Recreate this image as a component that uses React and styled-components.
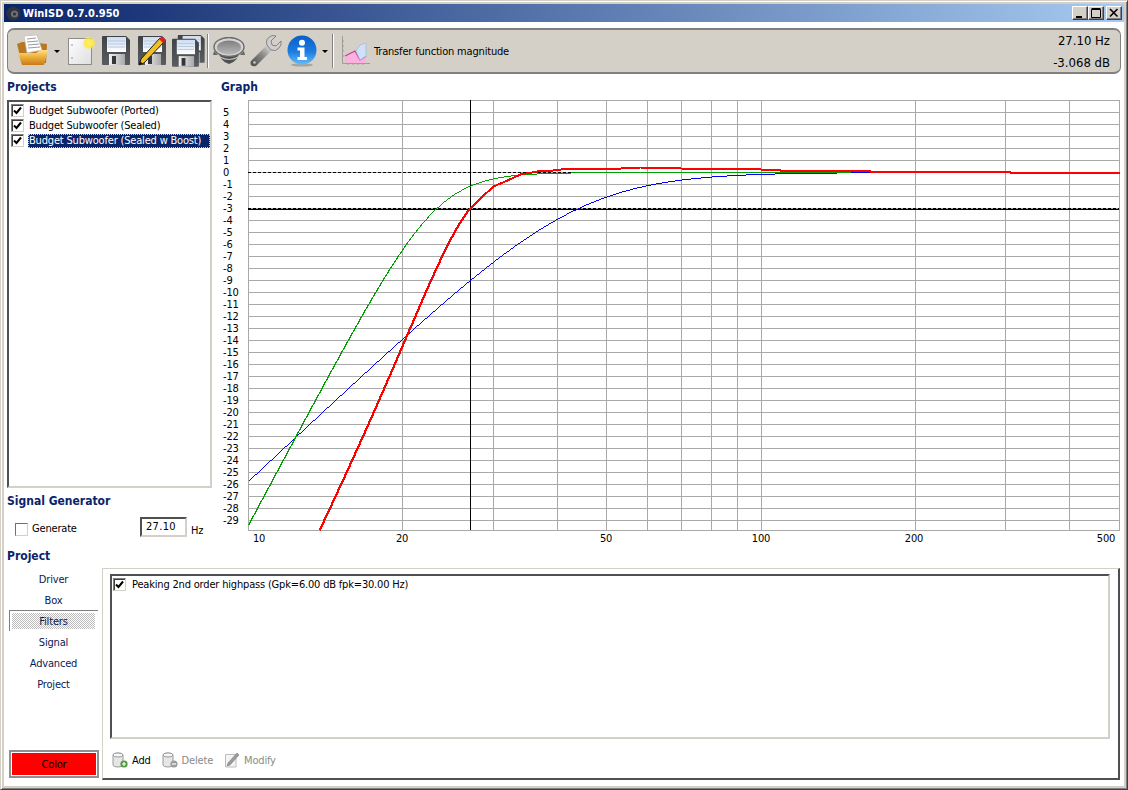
// WinISD main window: toolbar, project list, response graph and filter panel.
import React from 'react';
import styled, { createGlobalStyle } from 'styled-components';

const GlobalStyle = createGlobalStyle`
  html, body {
    margin: 0;
    padding: 0;
    overflow: hidden;
    background: #d4d0c8;
  }
  * { box-sizing: border-box; }
`;

const Window = styled.div`
  width: 1128px;
  height: 790px;
  display: flex;
  flex-direction: column;
  padding: 3px;
  background: #d4d0c8;
  border: 1px solid;
  border-color: #d4d0c8 #404040 #404040 #d4d0c8;
  box-shadow: inset 1px 1px 0 #fff, inset -1px -1px 0 #808080;
  font-family: "DejaVu Sans Condensed", "DejaVu Sans", sans-serif;
  font-stretch: condensed;
  font-size: 11px;
  letter-spacing: -0.18px;
  color: #000;
`;

const TitleBar = styled.div`
  height: 18px;
  flex: none;
  display: flex;
  align-items: center;
  padding: 0 2px;
  background: linear-gradient(90deg, #0a246a, #a6caf0);
`;

const TitleText = styled.span`
  margin-left: 2px;
  color: #fff;
  font-weight: bold;
  font-size: 11px;
  letter-spacing: 0;
`;

const TitleButtons = styled.div`
  margin-left: auto;
  display: flex;
`;

const CaptionButton = styled.div`
  width: 16px;
  height: 14px;
  margin-left: ${(p) => (p.$gap ? '2px' : '0')};
  display: flex;
  align-items: center;
  justify-content: center;
  background: #d4d0c8;
  border: 1px solid;
  border-color: #fff #404040 #404040 #fff;
  box-shadow: inset -1px -1px 0 #808080;
`;

const Client = styled.div`
  flex: 1;
  min-height: 0;
  display: flex;
  flex-direction: column;
  padding: 6px 3px 0 3px;
  background: #fff;
`;

const Toolbar = styled.div`
  height: 46px;
  flex: none;
  display: flex;
  align-items: center;
  padding: 0 9px 0 9px;
  background: #d4d0c8;
  border: 2px solid #808080;
  border-left-width: 1px;
  border-right-width: 1px;
  border-radius: 7px;
`;

const ToolIcon = styled.svg`
  flex: none;
  display: block;
  margin-left: ${(p) => p.$left || 0}px;
`;

const DropArrow = styled.span`
  flex: none;
  width: 0;
  height: 0;
  margin-left: ${(p) => p.$left || 0}px;
  border: 3px solid transparent;
  border-top: 3px solid #000;
  border-bottom: 0;
`;

const ToolSeparator = styled.span`
  flex: none;
  width: 2px;
  height: 34px;
  margin-left: ${(p) => p.$left || 0}px;
  background: #808080;
  border-right: 1px solid #fff;
`;

const GraphName = styled.span`
  margin-left: 4px;
  font-size: 11px;
  white-space: nowrap;
`;

const Readout = styled.div`
  margin-left: auto;
  display: flex;
  flex-direction: column;
  gap: 7px;
  padding-right: 1px;
  text-align: right;
  font-size: 13px;
  letter-spacing: 0;
  line-height: 15px;
`;

const Middle = styled.div`
  height: 466px;
  flex: none;
  display: grid;
  grid-template-columns: 205px 899px;
  column-gap: 9px;
`;

const Column = styled.div`
  display: flex;
  flex-direction: column;
  min-width: 0;
`;

const Heading = styled.div`
  height: ${(p) => p.$height || 26}px;
  flex: none;
  display: flex;
  align-items: center;
  padding-top: ${(p) => p.$top || 0}px;
  padding-bottom: 1px;
  color: #0a246a;
  font-weight: bold;
  font-size: 12px;
  letter-spacing: 0;
`;

const Sunken = styled.div`
  background: #fff;
  border: 2px solid;
  border-color: #505050 #d4d0c8 #d4d0c8 #505050;
`;

const ProjectList = styled(Sunken)`
  height: 388px;
  flex: none;
  padding: 1px 0 0 2px;
`;

const ListRow = styled.div`
  height: 15px;
  display: flex;
  align-items: center;
`;

const Check = styled.span`
  flex: none;
  width: 13px;
  height: 13px;
  display: flex;
  align-items: center;
  justify-content: center;
  background: #fff;
  border: 1px solid;
  border-color: #808080 #d4d0c8 #d4d0c8 #808080;
  box-shadow: inset 1px 1px 0 #404040;
`;

const RowLabel = styled.span`
  margin-left: ${(p) => p.$left || 4}px;
  padding: 0 1px;
  flex: ${(p) => (p.$selected ? 1 : 'none')};
  line-height: 14px;
  white-space: nowrap;
  color: ${(p) => (p.$selected ? '#fff' : '#000')};
  background: ${(p) => (p.$selected ? '#0a246a' : 'transparent')};
  outline: ${(p) => (p.$selected ? '1px dotted #d4d0c8' : 'none')};
  outline-offset: -1px;
`;

const GeneratorRow = styled.div`
  height: 26px;
  flex: none;
  display: grid;
  grid-template-columns: 13px 112px 47px auto;
  align-items: center;
  padding-left: 8px;
`;

const PlainCheck = styled(Check)`
  margin-top: 4px;
  box-shadow: none;
  border-color: #707070 #d4d0c8 #d4d0c8 #707070;
`;

const GenerateLabel = styled(RowLabel)`
  margin-top: 4px;
`;

const HzInput = styled(Sunken)`
  height: 20px;
  padding: 1px 0 0 4px;
  line-height: 14px;
  letter-spacing: 0.3px;
`;

const HzUnit = styled.span`
  margin: 6px 0 0 4px;
`;

const Plot = styled.svg`
  display: block;
  overflow: visible;
`;

const AxisText = styled.text`
  font-family: "DejaVu Sans Condensed", "DejaVu Sans", sans-serif;
  font-stretch: condensed;
  font-size: 11px;
  fill: #000;
`;

const Bottom = styled.div`
  flex: 1;
  min-height: 0;
  display: grid;
  grid-template-columns: 93px 1018px;
  margin-left: 2px;
  padding-bottom: 6px;
`;

const Tabs = styled.div`
  display: flex;
  flex-direction: column;
  padding-bottom: 2px;
`;

const Tab = styled.div`
  width: 89px;
  height: 21px;
  flex: none;
  display: flex;
  align-items: center;
  justify-content: center;
  color: #0a1a55;
  padding: 2px 3px 2px 2px;
  border-top: 1px solid ${(p) => (p.$selected ? '#808080' : 'transparent')};
  border-left: 1px solid ${(p) => (p.$selected ? '#808080' : 'transparent')};
  background: ${(p) =>
    p.$selected
      ? 'repeating-conic-gradient(#bdbdbd 0 25%, #fff 0 50%) 0 0 / 2px 2px content-box'
      : 'none'};
`;

const ColorButton = styled.div`
  width: 90px;
  height: 28px;
  margin-top: auto;
  display: flex;
  align-items: center;
  justify-content: center;
  background: #ff0000;
  border: 2px solid #909090;
  box-shadow: inset 0 0 0 1px #fff;
`;

const Panel = styled.div`
  display: flex;
  flex-direction: column;
  padding: 5px 8px 0 7px;
  border: 1px solid;
  border-width: 1px 2px 2px 1px;
  border-color: #d4d0c8 #505050 #505050 #d4d0c8;
`;

const FilterList = styled(Sunken)`
  height: 165px;
  flex: none;
  padding: 1px 0 0 1px;
`;

const PanelTools = styled.div`
  flex: 1;
  display: flex;
  align-items: center;
  padding: 3px 0 0 2px;
`;

const ToolAction = styled.div`
  display: flex;
  align-items: center;
  gap: 4px;
  margin-right: 11px;
  color: ${(p) => (p.$disabled ? '#8a8a8a' : '#000')};
`;

const CheckMark = () => (
  <svg width="9" height="9" viewBox="0 0 9 9">
    <path d="M1 4.5 L3.5 7 L8 1.5" fill="none" stroke="#000" strokeWidth="2" />
  </svg>
);

const Floppy = ({ x = 0, y = 0 }) => (
  <g transform={`translate(${x} ${y})`}>
    <path d="M1 0 H24 L28 4 V28 Q28 29 27 29 H1 Q0 29 0 28 V1 Q0 0 1 0 Z" fill="url(#floppyBody)" />
    <rect x="5" y="1" width="19" height="15" fill="url(#floppyLabel)" />
    <path d="M6 5 H23 M6 8 H23 M6 11 H23" stroke="#b5c6de" strokeWidth="1" />
    <rect x="7" y="18" width="16" height="11" fill="url(#floppyShutter)" />
    <rect x="10" y="20" width="4" height="8" fill="#33363a" />
  </g>
);

const FloppyDefs = () => (
  <defs>
    <linearGradient id="floppyBody" x1="0" y1="0" x2="0" y2="1">
      <stop offset="0" stopColor="#3f4246" />
      <stop offset="1" stopColor="#5a5d60" />
    </linearGradient>
    <linearGradient id="floppyLabel" x1="0" y1="0" x2="0" y2="1">
      <stop offset="0" stopColor="#cfdcf0" />
      <stop offset="1" stopColor="#ffffff" />
    </linearGradient>
    <linearGradient id="floppyShutter" x1="0" y1="0" x2="1" y2="0">
      <stop offset="0" stopColor="#f2f2f2" />
      <stop offset="1" stopColor="#a8a8a8" />
    </linearGradient>
  </defs>
);

const OpenIcon = () => (
  <ToolIcon width="32" height="32" viewBox="0 0 32 32" $left={0}>
    <defs>
      <linearGradient id="folderFront" x1="0" y1="0" x2="0" y2="1">
        <stop offset="0" stopColor="#fde08a" />
        <stop offset="0.45" stopColor="#eeb23c" />
        <stop offset="1" stopColor="#c9791a" />
      </linearGradient>
    </defs>
    <path d="M0 9 L5 7 L12 7 L30 9 L29 28 L5 29 Z" fill="#b8781f" />
    <path d="M7 1 L20 0 L25 15 L10 18 Z" fill="#fff" stroke="#b9b9b9" strokeWidth="0.7" />
    <path d="M10 4 L19 3 M10 7 L21 6 M11 10 L22 9 M11 13 L23 12" stroke="#9a9a9a" />
    <path d="M1 18 L19 18 L23 15 L31 15 L27 30 L5 30 Z" fill="url(#folderFront)" />
  </ToolIcon>
);

const NewIcon = () => (
  <ToolIcon width="28" height="30" viewBox="0 0 28 30" $left={8}>
    <defs>
      <linearGradient id="paper" x1="0" y1="0" x2="1" y2="1">
        <stop offset="0" stopColor="#ffffff" />
        <stop offset="1" stopColor="#dedede" />
      </linearGradient>
      <radialGradient id="glow">
        <stop offset="0" stopColor="#fff36a" />
        <stop offset="0.55" stopColor="#ffe84a" />
        <stop offset="1" stopColor="#ffe84a" stopOpacity="0" />
      </radialGradient>
    </defs>
    <rect x="0.5" y="2.5" width="23" height="26" fill="url(#paper)" stroke="#8c8c8c" />
    <circle cx="4" cy="9" r="0.8" fill="#888" />
    <circle cx="4" cy="22" r="0.8" fill="#888" />
    <circle cx="21" cy="7" r="7" fill="url(#glow)" />
  </ToolIcon>
);

const SaveIcon = () => (
  <ToolIcon width="28" height="30" viewBox="0 0 28 30" $left={6}>
    <FloppyDefs />
    <Floppy />
  </ToolIcon>
);

const SaveAsIcon = () => (
  <ToolIcon width="32" height="32" viewBox="0 0 32 32" $left={6}>
    <Floppy x={2} y={1} />
    <path d="M3 30 L5 24 L24 3 L28 7 L8 28 Z" fill="#f0c020" stroke="#1e1e1e" strokeWidth="1" />
    <path d="M23 4 L25 2 Q26 1 27 2 L29 4 Q30 5 29 6 L27 8 Z" fill="#d8202a" />
    <path d="M3 30 L4 26 L7 29 Z" fill="#1e1e1e" />
  </ToolIcon>
);

const SaveAllIcon = () => (
  <ToolIcon width="33" height="32" viewBox="0 0 33 32" $left={4}>
    <g transform="scale(0.96)">
      <Floppy x={6} y={0} />
      <Floppy x={0} y={4} />
    </g>
  </ToolIcon>
);

const SpeakerIcon = () => (
  <ToolIcon width="32" height="28" viewBox="0 0 32 28" $left={4}>
    <defs>
      <linearGradient id="cone" x1="0" y1="0" x2="0" y2="1">
        <stop offset="0" stopColor="#7f7f7f" />
        <stop offset="1" stopColor="#b9b9b9" />
      </linearGradient>
    </defs>
    <path d="M5 12 Q6 24 16 27 Q26 24 27 12 Z" fill="#4f4f4f" />
    <path d="M1 14 L0 18 L5 18 Z M31 14 L32 18 L27 18 Z" fill="#666" />
    <ellipse cx="16" cy="10" rx="15" ry="9.5" fill="#d4d4d4" stroke="#6a6a6a" strokeWidth="1.4" />
    <ellipse cx="16" cy="10.5" rx="12" ry="7" fill="url(#cone)" />
    <path d="M7 20 Q16 25 25 20" fill="none" stroke="#c4c4c4" strokeWidth="1.2" />
  </ToolIcon>
);

const WrenchIcon = () => (
  <ToolIcon width="32" height="32" viewBox="0 0 32 32" $left={5}>
    <defs>
      <linearGradient id="steel" x1="0" y1="1" x2="1" y2="0">
        <stop offset="0" stopColor="#4a4a4a" />
        <stop offset="0.55" stopColor="#8a8a8a" />
        <stop offset="1" stopColor="#e8e8e8" />
      </linearGradient>
    </defs>
    <path d="M1 26 L17 10 L22 15 L6 31 Q3 32 1 30 Q0 28 1 26 Z" fill="url(#steel)" />
    <path d="M17 10 Q15 4 21 1 Q23 0 26 1 L21 6 L22 10 L26 11 L31 6 Q32 10 29 13 Q26 17 21 15 Z" fill="#cfcfcf" stroke="#6f6f6f" strokeWidth="0.8" />
    <circle cx="4.5" cy="27.5" r="1.2" fill="#d4d0c8" />
  </ToolIcon>
);

const InfoIcon = () => (
  <ToolIcon width="30" height="32" viewBox="0 0 30 32" $left={5}>
    <defs>
      <linearGradient id="infoBlue" x1="0" y1="0" x2="0" y2="1">
        <stop offset="0" stopColor="#0b5ec9" />
        <stop offset="0.55" stopColor="#1a7be0" />
        <stop offset="1" stopColor="#63bdf8" />
      </linearGradient>
    </defs>
    <ellipse cx="15" cy="30" rx="11" ry="1.6" fill="#a8a59f" />
    <circle cx="15" cy="15" r="14.5" fill="url(#infoBlue)" />
    <circle cx="15" cy="7.8" r="3" fill="#fff" />
    <path d="M10.5 12.5 H17.5 V22 H20 V25 H10.5 V22 H13 V15.5 H10.5 Z" fill="#fff" />
  </ToolIcon>
);

const GraphIcon = () => (
  <ToolIcon width="28" height="30" viewBox="0 0 28 30" $left={8}>
    <path d="M0.5 0 V27.5 H28" fill="none" stroke="#a09d97" />
    <path d="M0 5 H2 M0 10 H2 M0 15 H2 M0 20 H2 M6 26 V29 M11 26 V29 M16 26 V29 M21 26 V29" stroke="#a09d97" />
    <path d="M3 27 L4 19 L13 15 L18 24 L24 20 V27 Z" fill="#fbb0de" />
    <path d="M3 20 L13 15 L18 24 L24 20" fill="none" stroke="#c83c96" strokeWidth="1.2" />
    <path d="M14 15 L18 9 L24 7 V20 L18 24 Z" fill="#cfe0f8" stroke="#9fb9e0" strokeWidth="0.7" />
  </ToolIcon>
);

const DbIcon = ({ badge }) => (
  <svg width="16" height="16" viewBox="0 0 16 16">
    <path d="M1 3 Q1 1 6 1 Q11 1 11 3 V13 Q11 15 6 15 Q1 15 1 13 Z" fill="#e6e6e6" stroke="#9a9a9a" />
    <ellipse cx="6" cy="3" rx="5" ry="2" fill="#f8f8f8" stroke="#9a9a9a" />
    <circle cx="12" cy="12" r="3.6" fill={badge === 'add' ? '#4f9a3a' : '#9c9c9c'} />
    <path d={badge === 'add' ? 'M10 12 H14 M12 10 V14' : 'M10 12 H14'} stroke="#fff" strokeWidth="1.2" />
  </svg>
);

const ModifyIcon = () => (
  <svg width="16" height="16" viewBox="0 0 16 16">
    <path d="M1.5 2.5 H12 V15 H1.5 Z" fill="#f4f4f4" stroke="#bdbdbd" />
    <path d="M3 14 L4 11 L13 1 L15 3 L6 13 Z" fill="#9c9c9c" stroke="#7c7c7c" strokeWidth="0.6" />
  </svg>
);

// graph scale taken from the picture: 10..500 Hz and 5..-30 dB
const PLOT = { left: 27, right: 898, top: 0, bottom: 430, zero: 72, perDb: 12 };
const freqToX = (f) => Math.round(PLOT.left + (871 / Math.log10(50)) * Math.log10(f / 10));
const pxToFreq = (x) => 10 * Math.pow(10, ((x - PLOT.left) * Math.log10(50)) / 871);
const dbToY = (db) => PLOT.zero - db * PLOT.perDb;

const highpass = (f, fc, q) => {
  const r = f / fc;
  return 20 * Math.log10((r * r) / Math.sqrt((1 - r * r) ** 2 + (r / q) ** 2));
};

const sealed = (f) => highpass(f, 44, 0.707);
const boosted = (f) => sealed(f) + highpass(f, 27, 2);
const ported = (f) => highpass(f, 23.3, 0.54) + highpass(f, 23.3, 1.31);

const curvePoints = (fn, endX) => {
  const pts = [];
  for (let x = PLOT.left; x <= endX; x++) {
    const y = Math.round(dbToY(fn(pxToFreq(x))));
    if (y <= PLOT.bottom) pts.push(`${x + 0.5},${y + 0.5}`);
  }
  return pts.join(' ');
};

// upper part of the boosted curve, read off the picture (plot px)
const boostedTop = [
  [249, 108], [259, 98], [272, 86], [286, 80], [299, 74], [316, 71], [332, 70],
  [340, 69], [400, 68], [419, 67], [449, 67], [459, 68], [539, 69], [559, 70],
  [639, 70], [649, 71], [779, 71], [789, 72], [898, 72],
];

const boostedPoints = () => {
  const cursor = freqToX(27.1);
  const lower = curvePoints(boosted, cursor - 1);
  return `${lower} ${boostedTop.map(([x, y]) => `${x + 0.5},${y + 0.5}`).join(' ')}`;
};

const gridFreqs = [20, 30, 40, 50, 60, 70, 80, 90, 100, 200, 300, 400];
const dbTicks = Array.from({ length: 35 }, (_, i) => 5 - i);
const freqLabels = [
  { text: '10', x: 38 },
  { text: '20', x: 181 },
  { text: '50', x: 385 },
  { text: '100', x: 540 },
  { text: '200', x: 693 },
  { text: '500', x: 885 },
];

const Graph = () => {
  const cursorX = freqToX(27.1);
  return (
    <Plot width="899" height="440" viewBox="0 0 899 440">
      <g stroke="#a9a9a9" shapeRendering="crispEdges">
        <rect x={PLOT.left + 0.5} y="0.5" width={PLOT.right - PLOT.left} height={PLOT.bottom} fill="#fff" />
        {gridFreqs.map((f) => (
          <line key={f} x1={freqToX(f) + 0.5} x2={freqToX(f) + 0.5} y1="0" y2={PLOT.bottom} />
        ))}
        {dbTicks.map((db) => (
          <line key={db} x1={PLOT.left} x2={PLOT.right} y1={dbToY(db) + 0.5} y2={dbToY(db) + 0.5} />
        ))}
      </g>
      <g fill="none" shapeRendering="crispEdges">
        <line x1={PLOT.left} x2={PLOT.right} y1={PLOT.zero + 0.5} y2={PLOT.zero + 0.5} stroke="#000" strokeDasharray="3 2" />
        <line x1={PLOT.left} x2={PLOT.right} y1={dbToY(-3) + 0.5} y2={dbToY(-3) + 0.5} stroke="#000" strokeDasharray="3 2" />
        <line x1={PLOT.left} x2={PLOT.right} y1={dbToY(-3) + 1.5} y2={dbToY(-3) + 1.5} stroke="#000" />
        <line x1={cursorX + 0.5} x2={cursorX + 0.5} y1="0" y2={PLOT.bottom} stroke="#000" />
        <polyline points={curvePoints(sealed, 780)} stroke="#0000ff" />
        <polyline points={curvePoints(ported, 629)} stroke="#00a000" />
        <polyline points={boostedPoints()} stroke="#ff0000" strokeWidth="2" />
      </g>
      {dbTicks.filter((db) => db > -30).map((db) => (
        <AxisText key={db} x="2" y={dbToY(db) + 4}>{db}</AxisText>
      ))}
      {freqLabels.map((l) => (
        <AxisText key={l.text} x={l.x} y="442" textAnchor="middle">{l.text}</AxisText>
      ))}
    </Plot>
  );
};

const projects = [
  { name: 'Budget Subwoofer (Ported)' },
  { name: 'Budget Subwoofer (Sealed)' },
  { name: 'Budget Subwoofer (Sealed w Boost)', selected: true },
];

const tabs = ['Driver', 'Box', 'Filters', 'Signal', 'Advanced', 'Project'];

export default function App() {
  return (
    <Window>
      <GlobalStyle />
      <TitleBar>
        <svg width="15" height="15" viewBox="0 0 15 15">
          <circle cx="7.5" cy="7.5" r="7" fill="#2e323a" />
          <circle cx="8.5" cy="8" r="3.6" fill="#6a7078" />
          <circle cx="8.5" cy="8" r="1.5" fill="#2a2d33" />
        </svg>
        <TitleText>WinISD 0.7.0.950</TitleText>
        <TitleButtons>
          <CaptionButton>
            <svg width="10" height="10" viewBox="0 0 10 10"><path d="M1 8 H7 V10 H1 Z" /></svg>
          </CaptionButton>
          <CaptionButton>
            <svg width="10" height="10" viewBox="0 0 10 10"><path d="M0.5 1.5 H9.5 V9.5 H0.5 Z M0.5 0.5 H9.5" fill="none" stroke="#000" /></svg>
          </CaptionButton>
          <CaptionButton $gap>
            <svg width="10" height="10" viewBox="0 0 10 10"><path d="M1 1 L8.5 8.5 M8.5 1 L1 8.5" stroke="#000" strokeWidth="1.6" /></svg>
          </CaptionButton>
        </TitleButtons>
      </TitleBar>

      <Client>
        <Toolbar>
          <OpenIcon />
          <DropArrow $left={5} />
          <NewIcon />
          <SaveIcon />
          <SaveAsIcon />
          <SaveAllIcon />
          <ToolSeparator $left={2} />
          <SpeakerIcon />
          <WrenchIcon />
          <InfoIcon />
          <DropArrow $left={5} />
          <ToolSeparator $left={4} />
          <GraphIcon />
          <GraphName>Transfer function magnitude</GraphName>
          <Readout>
            <span>27.10 Hz</span>
            <span>-3.068 dB</span>
          </Readout>
        </Toolbar>

        <Middle>
          <Column>
            <Heading>Projects</Heading>
            <ProjectList>
              {projects.map((p) => (
                <ListRow key={p.name}>
                  <Check><CheckMark /></Check>
                  <RowLabel $selected={p.selected}>{p.name}</RowLabel>
                </ListRow>
              ))}
            </ProjectList>
            <Heading>Signal Generator</Heading>
            <GeneratorRow>
              <PlainCheck />
              <GenerateLabel $left={3}>Generate</GenerateLabel>
              <HzInput>27.10</HzInput>
              <HzUnit>Hz</HzUnit>
            </GeneratorRow>
          </Column>
          <Column>
            <Heading>Graph</Heading>
            <Graph />
          </Column>
        </Middle>

        <Heading $height={28} $top={4}>Project</Heading>

        <Bottom>
          <Tabs>
            {tabs.map((t) => (
              <Tab key={t} $selected={t === 'Filters'}>{t}</Tab>
            ))}
            <ColorButton>Color</ColorButton>
          </Tabs>
          <Panel>
            <FilterList>
              <ListRow>
                <Check><CheckMark /></Check>
                <RowLabel $left={5}>Peaking 2nd order highpass (Gpk=6.00 dB fpk=30.00 Hz)</RowLabel>
              </ListRow>
            </FilterList>
            <PanelTools>
              <ToolAction><DbIcon badge="add" />Add</ToolAction>
              <ToolAction $disabled><DbIcon badge="del" />Delete</ToolAction>
              <ToolAction $disabled><ModifyIcon />Modify</ToolAction>
            </PanelTools>
          </Panel>
        </Bottom>
      </Client>
    </Window>
  );
}
